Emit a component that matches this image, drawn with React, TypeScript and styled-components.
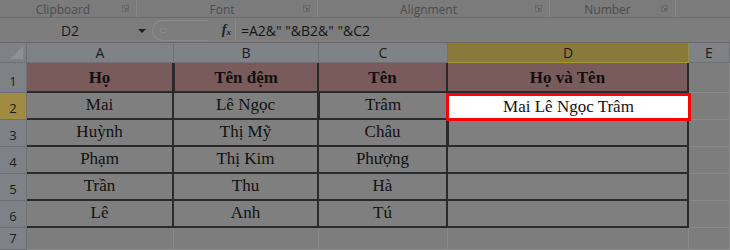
import styled, { createGlobalStyle } from "styled-components"

const GlobalStyle = createGlobalStyle`
    body {
        margin: 0;
        background: #7b7b7b;
        font-family: "Open Sans", "Liberation Sans", sans-serif;
    }
`

const groups = [
    { label: "Clipboard", width: 137 },
    { label: "Font", width: 181 },
    { label: "Alignment", width: 232 },
    { label: "Number", width: 126 },
]

const columns = ["A", "B", "C", "D", "E"]

const rows = [
    ["Họ", "Tên đệm", "Tên", "Họ và Tên"],
    ["Mai", "Lê Ngọc", "Trâm", "Mai Lê Ngọc Trâm"],
    ["Huỳnh", "Thị Mỹ", "Châu", ""],
    ["Phạm", "Thị Kim", "Phượng", ""],
    ["Trần", "Thu", "Hà", ""],
    ["Lê", "Anh", "Tú", ""],
]

const Launcher = () => (
    <svg width="7" height="7" viewBox="0 0 7 7">
        <rect x="0.5" y="0.5" width="6" height="6" fill="none" stroke="#6a6a6a" />
        <path d="M2 2 L5 5 M5 3 V5 H3" stroke="#5a5a5a" fill="none" />
    </svg>
)

export default function App() {
    return (
        <Page>
            <GlobalStyle />
            <Ribbon>
                {groups.map(g => (
                    <Group key={g.label} $width={g.width}>
                        <GroupLabel>{g.label}</GroupLabel>
                        <LauncherBox><Launcher /></LauncherBox>
                    </Group>
                ))}
            </Ribbon>
            <FormulaBar>
                <NameBox>
                    <span>D2</span>
                    <Arrow />
                </NameBox>
                <Buttons>
                    <Pill>
                        <PillDot />
                    </Pill>
                    <Fx>f<sub>x</sub></Fx>
                </Buttons>
                <Formula>=A2&amp;" "&amp;B2&amp;" "&amp;C2</Formula>
            </FormulaBar>
            <Sheet>
                <Corner>
                    <CornerTriangle />
                </Corner>
                {columns.map(c => (
                    <ColHead key={c} $active={c === "D"}>{c}</ColHead>
                ))}
                {rows.map((r, i) => (
                    <Row key={i} index={i} cells={r} />
                ))}
                <RowHead $active={false}>7</RowHead>
                {columns.map(c => <Empty key={c} />)}
            </Sheet>
        </Page>
    )
}

const Row = ({ index, cells }: { index: number, cells: string[] }) => (
    <>
        <RowHead $active={index === 1}>{index + 1}</RowHead>
        {cells.map((text, j) =>
            index === 1 && j === 3 ? (
                <Selected key={j}>{text}</Selected>
            ) : (
                <Cell key={j} $header={index === 0}>{text}</Cell>
            )
        )}
        <Empty />
    </>
)

const Page = styled.div`
    width: 730px;
    height: 250px;
    overflow: hidden;
    background: #7b7b7b;
`

const Ribbon = styled.div`
    display: flex;
    height: 17px;
    border-bottom: 1px solid #6c6c6c;
`

const Group = styled.div<{ $width: number }>`
    position: relative;
    display: flex;
    align-items: center;
    justify-content: center;
    width: ${p => p.$width}px;
    height: 100%;
    border-right: 1px solid #888;
    box-sizing: border-box;
`

const GroupLabel = styled.span`
    font-size: 12px;
    color: #4c4c4c;
    margin-right: 10px;
    margin-top: 1px;
`

const LauncherBox = styled.span`
    position: absolute;
    right: 7px;
    top: 5px;
    display: flex;
`

const FormulaBar = styled.div`
    display: flex;
    align-items: center;
    height: 24px;
    border-bottom: 1px solid #6a6a6a;
    background: #7d7d7d;
`

const NameBox = styled.div`
    position: relative;
    display: flex;
    align-items: center;
    justify-content: center;
    width: 150px;
    height: 21px;
    font-size: 14px;
    color: #1c1c1c;
    padding-right: 10px;
    box-sizing: border-box;
`

const Arrow = styled.span`
    position: absolute;
    right: 4px;
    top: 9px;
    border-left: 4px solid transparent;
    border-right: 4px solid transparent;
    border-top: 4px solid #1e1e1e;
`

const Buttons = styled.div`
    display: flex;
    align-items: center;
    justify-content: space-between;
    width: 85px;
    height: 22px;
    padding-left: 2px;
    padding-right: 4px;
    box-sizing: border-box;
`

const Pill = styled.div`
    display: flex;
    align-items: center;
    width: 56px;
    height: 21px;
    border: 1px solid #8c8c8c;
    border-right: none;
    border-radius: 12px 0 0 12px;
    padding-left: 7px;
    box-sizing: border-box;
`

const PillDot = styled.span`
    width: 5px;
    height: 3px;
    border: 1px solid #8a8a8a;
    border-radius: 2px;
`

const Fx = styled.span`
    font-family: "Liberation Serif", serif;
    font-style: italic;
    font-weight: 700;
    font-size: 14px;
    color: #222;
    sub {
        font-size: 9px;
        vertical-align: -1px;
    }
`

const Formula = styled.div`
    flex: 1;
    height: 22px;
    display: flex;
    align-items: center;
    padding-left: 5px;
    font-size: 14px;
    color: #151515;
    border-left: 1px solid #8a8a8a;
`

const Sheet = styled.div`
    display: grid;
    grid-template-columns: 27px 147px 145px 129px 241px 1fr;
    grid-template-rows: 20px 30px repeat(5, 27px) 22px;
`

const Corner = styled.div`
    position: relative;
    background: #7e8287;
    border-right: 1px solid #6d7075;
    border-bottom: 1px solid #6d7075;
`

const CornerTriangle = styled.span`
    position: absolute;
    right: 3px;
    bottom: 3px;
    border-left: 13px solid transparent;
    border-bottom: 13px solid #8d9196;
`

const ColHead = styled.div<{ $active: boolean }>`
    display: flex;
    align-items: center;
    justify-content: center;
    font-size: 14px;
    color: #1c1c1c;
    background: ${p => (p.$active ? "#8a7a3a" : "#7f8388")};
    border-right: 1px solid ${p => (p.$active ? "#9a8c48" : "#6e7277")};
    border-bottom: 1px solid ${p => (p.$active ? "#a8962f" : "#6e7277")};
`

const RowHead = styled.div<{ $active: boolean }>`
    display: flex;
    align-items: flex-end;
    justify-content: center;
    padding-bottom: 2px;
    box-sizing: border-box;
    font-size: 13px;
    color: #1c1c1c;
    background: ${p => (p.$active ? "#a08b42" : "#7e8287")};
    border-right: 1px solid #6d7075;
    border-bottom: 1px solid #6d7075;
`

const Cell = styled.div<{ $header: boolean }>`
    display: flex;
    align-items: flex-end;
    justify-content: center;
    padding-bottom: 3px;
    box-sizing: border-box;
    font-family: "Liberation Serif", serif;
    font-size: 17px;
    font-weight: ${p => (p.$header ? 700 : 400)};
    color: #111;
    background: ${p => (p.$header ? "#795b5b" : "#7f7f7f")};
    border-right: 2px solid #2a2a2a;
    border-bottom: 2px solid #2a2a2a;
    &:nth-child(7n + 2) {
        border-left: 1px solid #2a2a2a;
    }
`

const Selected = styled.div`
    position: relative;
    z-index: 1;
    display: flex;
    align-items: center;
    justify-content: center;
    margin: 0 -2px -1px -2px;
    background: #fff;
    border: 3px solid #f00;
    font-family: "Liberation Serif", serif;
    font-size: 17px;
    color: #111;
`

const Empty = styled.div`
    background: #7d7d7d;
    border-right: 1px solid #8a8a8a;
    border-bottom: 1px solid #8a8a8a;
`
